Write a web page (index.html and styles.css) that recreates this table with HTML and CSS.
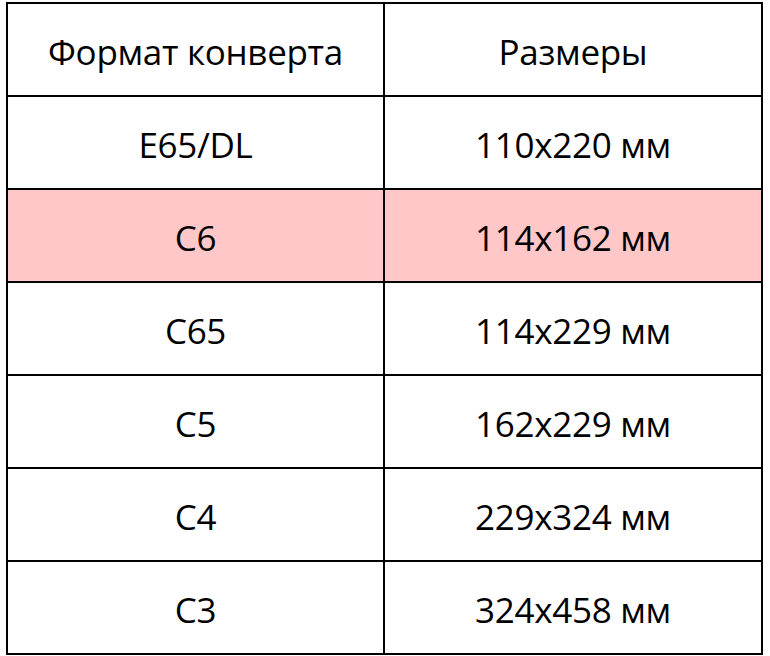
FILE: index.html
```html
<!DOCTYPE html>
<html>
<head>
<meta charset="utf-8">
<link rel="stylesheet" href="styles.css">
</head>
<body>
<div class="table">
  <div class="cell">Формат конверта</div>
  <div class="cell">Размеры</div>
  <div class="cell">E65/DL</div>
  <div class="cell">110x220 мм</div>
  <div class="cell pink">C6</div>
  <div class="cell pink">114x162 мм</div>
  <div class="cell">C65</div>
  <div class="cell">114x229 мм</div>
  <div class="cell">C5</div>
  <div class="cell">162x229 мм</div>
  <div class="cell">C4</div>
  <div class="cell">229x324 мм</div>
  <div class="cell">C3</div>
  <div class="cell">324x458 мм</div>
</div>
</body>
</html>
```
FILE: styles.css
```css
html, body {
  margin: 0;
  padding: 0;
  background: #fff;
}
body {
  padding: 2px 0 0 6px;
}
.table {
  display: grid;
  grid-template-columns: 375px 376px;
  grid-auto-rows: 91px;
  gap: 2px;
  padding: 2px;
  width: 757px;
  box-sizing: border-box;
  background: #000;
}
.cell {
  background: #fff;
  display: flex;
  align-items: center;
  justify-content: center;
  font-family: "Open Sans", sans-serif;
  font-size: 35px;
  color: #000;
  padding-top: 4px;
  box-sizing: border-box;
  letter-spacing: -0.3px;
}
.cell.pink {
  background: #ffc7c7;
}
```
